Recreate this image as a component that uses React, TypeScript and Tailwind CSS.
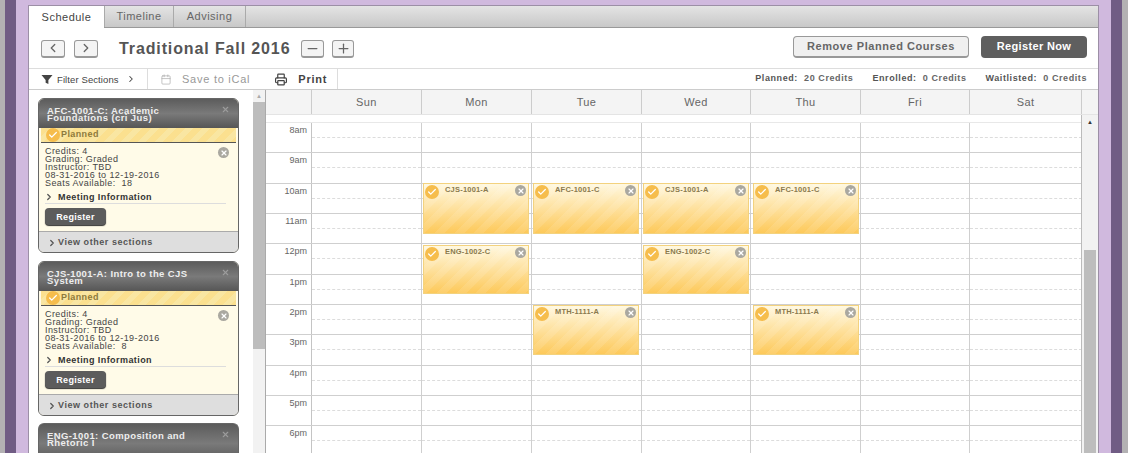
import React from 'react';
import { ChevronLeft, ChevronRight, Minus, Plus, Calendar, Printer, X, Check } from 'lucide-react';

const DAYS = ['Sun', 'Mon', 'Tue', 'Wed', 'Thu', 'Fri', 'Sat'];
const DAY_WIDTHS = ['w-[110px]', 'w-[110px]', 'w-[110px]', 'w-[109px]', 'w-[110px]', 'w-[109px]', 'w-[112px]'];
const HOURS = ['8am', '9am', '10am', '11am', '12pm', '1pm', '2pm', '3pm', '4pm', '5pm', '6pm'];

const COURSES = [
  { title: 'AFC-1001-C: Academic Foundations (cri Jus)', seats: '18' },
  { title: 'CJS-1001-A: Intro to the CJS System', seats: '8' },
];

// calendar blocks, positions are relative to the scrolling grid body
const EVENTS = [
  { name: 'CJS-1001-A', pos: 'left-[157px] top-[68px] h-[51px]' },
  { name: 'AFC-1001-C', pos: 'left-[267px] top-[68px] h-[51px]' },
  { name: 'CJS-1001-A', pos: 'left-[377px] top-[68px] h-[51px]' },
  { name: 'AFC-1001-C', pos: 'left-[487px] top-[68px] h-[51px]' },
  { name: 'ENG-1002-C', pos: 'left-[157px] top-[130px] h-[49px]' },
  { name: 'ENG-1002-C', pos: 'left-[377px] top-[130px] h-[49px]' },
  { name: 'MTH-1111-A', pos: 'left-[267px] top-[190px] h-[50px]' },
  { name: 'MTH-1111-A', pos: 'left-[487px] top-[190px] h-[50px]' },
];

const stripes =
  'bg-[repeating-linear-gradient(135deg,rgba(255,255,255,0.1)_0px,rgba(255,255,255,0.1)_7px,transparent_7px,transparent_14px),linear-gradient(to_bottom,#fff8e0,#fdc95a)]';

const cardHead =
  'bg-gradient-to-b from-[#5c5c5c] via-[#7a7a7a] to-[#565656] pl-2 pr-2 pt-[8px] text-[9.5px] leading-[7px] font-bold tracking-[0.4px] text-[#eee]';

function CheckBadge({ className }: { className: string }) {
  return (
    <span className={`flex items-center justify-center rounded-full bg-[#f6bd4c] ${className}`}>
      <Check className="h-[10px] w-[10px] text-white" strokeWidth={3} />
    </span>
  );
}

function CloseDot({ className }: { className: string }) {
  return (
    <span className={`flex h-[11px] w-[11px] items-center justify-center rounded-full bg-[#aaa8a0] ${className}`}>
      <X className="h-[8px] w-[8px] text-white" strokeWidth={3.5} />
    </span>
  );
}

function IconButton({ children, className }: { children: React.ReactNode; className: string }) {
  return (
    <button className={`mt-[3px] flex h-[18px] items-center justify-center rounded-[3px] border border-[#999] border-b-2 bg-[#f4f4f4] text-[#666] ${className}`}>
      {children}
    </button>
  );
}

function CourseCard({ title, seats }: { title: string; seats: string }) {
  return (
    <div className="mb-[8px] h-[155px] w-[201px] overflow-hidden rounded-[6px] border border-[#666] bg-[#fffbe8]">
      <div className={`flex h-[29px] items-start justify-between ${cardHead}`}>
        <span className="w-[165px]">{title}</span>
        <X className="mt-[-2px] h-[9px] w-[9px] text-[#9c9c9c]" strokeWidth={3} />
      </div>
      <div className="mx-[2px] flex h-[15px] items-center border-b border-[#555] bg-[repeating-linear-gradient(135deg,#fbe08f_0px,#fbe08f_6px,#f9e6a2_6px,#f9e6a2_12px)] pl-[5px] text-[9px] font-bold tracking-[0.4px] text-[#8d7a3c]">
        <CheckBadge className="mr-[1px] h-[14px] w-[14px]" />
        Planned
      </div>
      <div className="relative h-[88px] px-[6px] pt-[4px] text-[9px] leading-[8px] tracking-[0.42px] text-[#444]">
        <CloseDot className="absolute right-[9px] top-[4px]" />
        <div>Credits: 4</div>
        <div>Grading: Graded</div>
        <div>Instructor: TBD</div>
        <div>08-31-2016 to 12-19-2016</div>
        <div>Seats Available:&nbsp; {seats}</div>
        <div className="mt-[4px] mr-[6px] flex h-[13px] items-center border-b border-[#ddd] pb-[1px] font-bold text-[#333]">
          <ChevronRight className="ml-[-1px] mr-[4px] h-[10px] w-[10px] text-[#555]" strokeWidth={3} />
          Meeting Information
        </div>
        <button className="mt-[4px] flex h-[17px] w-[61px] items-center justify-center rounded-[4px] bg-[#5c5c5c] text-[9px] font-bold tracking-[0.3px] text-white shadow-[0_1px_1px_#333]">
          Register
        </button>
      </div>
      <div className="flex h-[21px] items-center border-t border-[#aaa] bg-[#dedede] pl-[8px] pt-[1px] text-[9px] font-bold tracking-[0.55px] text-[#555]">
        <ChevronRight className="mr-[1px] h-[10px] w-[10px]" strokeWidth={3} />
        View other sections
      </div>
    </div>
  );
}

function HourRow({ hour }: { hour: string }) {
  return (
    <div className="flex h-[30.33px] border-b border-[#cfcfcf]">
      <div className="w-[46px] shrink-0 border-r border-[#c4c4c4] pr-[4px] pt-[1px] text-right text-[9px] leading-[12px] text-[#666]">{hour}</div>
      {DAY_WIDTHS.map((w, i) => (
        <div key={i} className={`${w} shrink-0 border-r border-[#cfcfcf] last:border-r-0`}>
          <div className="h-[15px] border-b border-dashed border-[#dcdcdc]" />
        </div>
      ))}
    </div>
  );
}

export default function App() {
  return (
    <div className="flex h-[453px] w-[1128px] overflow-hidden bg-[#d0b9de] font-['Liberation_Sans',Arial,sans-serif]">
      <div className="w-[5px] shrink-0 bg-[#b3b1b3]" />
      <div className="w-[11px] shrink-0 bg-[#705c84]" />
      <div className="flex-1 px-[12px] pt-[5px]">
        <div className="h-[448px] w-[1071px] overflow-hidden border border-b-0 border-[#9c8fa6] bg-white">
          {/* Tabs */}
          <div className="flex h-[22px] border-b border-[#999] bg-gradient-to-b from-[#e4e4e4] to-[#c8c8c8] text-[11px] tracking-[0.5px]">
            <div className="flex h-[22px] w-[75px] items-center justify-center bg-white text-[#444]">Schedule</div>
            <div className="flex w-[70px] items-center justify-center border-x border-[#aaa] text-[#666]">Timeline</div>
            <div className="flex w-[72px] items-center justify-center border-r border-[#aaa] text-[#666]">Advising</div>
          </div>

          {/* Term header */}
          <div className="flex h-[41px] items-center border-b border-[#ddd] pb-[2px] pl-[12px] pr-[11px]">
            <IconButton className="mr-[9px] w-[24px]"><ChevronLeft className="h-[14px] w-[14px]" strokeWidth={2.25} /></IconButton>
            <IconButton className="w-[24px]"><ChevronRight className="h-[14px] w-[14px]" strokeWidth={2.25} /></IconButton>
            <span className="ml-[21px] mt-[3px] text-[16px] font-bold tracking-[0.88px] text-[#555]">Traditional Fall 2016</span>
            <IconButton className="ml-[11px] mr-[8px] w-[23px]"><Minus className="h-[15px] w-[15px]" /></IconButton>
            <IconButton className="w-[22px]"><Plus className="h-[15px] w-[15px]" /></IconButton>
            <button className="ml-auto flex h-[22px] w-[176px] items-center justify-center rounded-[4px] border border-[#999] border-b-2 bg-[#f0f0f0] pb-[1px] text-[11px] font-bold tracking-[0.55px] text-[#666]">
              Remove Planned Courses
            </button>
            <button className="ml-[12px] flex h-[22px] w-[106px] items-center justify-center rounded-[4px] bg-[#5f5f5f] pb-[2px] text-[11px] font-bold tracking-[0.35px] text-white">
              Register Now
            </button>
          </div>

          {/* Section toolbar */}
          <div className="flex h-[21px] items-center border-b border-[#ccc] pr-[11px] text-[#555]">
            <div className="flex h-full w-[119px] items-center border-r border-[#ddd] pl-[12px] text-[9.5px] tracking-[0.1px] text-[#444]">
              <svg viewBox="0 0 12 12" className="mr-[4px] h-[11px] w-[12px] fill-[#444]"><path d="M0 1h12L7.5 6.5V11L4.5 9.5V6.5z" /></svg>
              <span className="mt-[2px]">Filter Sections</span>
              <ChevronRight className="ml-[7px] h-[10px] w-[10px]" strokeWidth={2.5} />
            </div>
            <div className="flex h-full w-[190px] items-center border-r border-[#ddd] pl-[12px] text-[11px] tracking-[0.75px]">
              <Calendar className="mr-[10px] h-[11px] w-[12px] text-[#aaa]" strokeWidth={1.5} />
              <span className="text-[#999]">Save to iCal</span>
              <Printer className="ml-[24px] mr-[10px] h-[13px] w-[14px] text-[#444]" strokeWidth={2.2} />
              <span className="font-bold text-[#444]">Print</span>
            </div>
            <div className="ml-auto flex gap-[19px] text-[9px] font-bold tracking-[0.58px] text-[#666]">
              <span><span className="text-[#555]">Planned:</span>&nbsp; 20 Credits</span>
              <span><span className="text-[#555]">Enrolled:</span>&nbsp; 0 Credits</span>
              <span><span className="text-[#555]">Waitlisted:</span>&nbsp; 0 Credits</span>
            </div>
          </div>

          <div className="flex h-[370px]">
            {/* Sidebar */}
            <div className="flex w-[237px] shrink-0 border-r border-[#aaa]">
              <div className="w-[224px] shrink-0 pl-[9px] pt-[8px]">
                {COURSES.map(c => (
                  <CourseCard key={c.title} title={c.title} seats={c.seats} />
                ))}
                <div className={`mt-[-1px] h-[40px] w-[201px] rounded-t-[6px] border border-b-0 border-[#666] ${cardHead}`}>
                  <div className="flex justify-between">
                    <span className="w-[165px]">ENG-1001: Composition and Rhetoric I</span>
                    <X className="mt-[-2px] h-[9px] w-[9px] text-[#9c9c9c]" strokeWidth={3} />
                  </div>
                </div>
              </div>
              <div className="w-[12px] shrink-0 bg-[#f2f2f2]">
                <div className="h-[12px] text-center text-[6px] leading-[12px] text-[#aaa]">▲</div>
                <div className="h-[247px] bg-[#bdbdbd]" />
              </div>
            </div>

            {/* Calendar */}
            <div className="relative flex-1 overflow-hidden">
              <div className="flex h-[25px] border-b border-[#e4e4e4] bg-[#f4f4f4] text-[11px] tracking-[0.4px] text-[#666]">
                <div className="w-[46px] shrink-0 border-r border-[#ccc]" />
                {DAYS.map((d, i) => (
                  <div key={d} className={`${DAY_WIDTHS[i]} flex shrink-0 items-center justify-center border-r border-[#ccc]`}>{d}</div>
                ))}
                <div className="flex-1" />
              </div>
              <div className="relative h-[345px]">
                <div className="h-[8px] w-[816px] border-b border-[#e8e8e8] bg-white" />
                <div className="w-[816px]">
                  {HOURS.map(h => (
                    <HourRow key={h} hour={h} />
                  ))}
                </div>
                {EVENTS.map((e, i) => (
                  <div key={i} className={`absolute w-[106px] border border-[#f3d27e] ${stripes} ${e.pos}`}>
                    <CheckBadge className="absolute left-[1px] top-[1px] h-[14px] w-[14px]" />
                    <span className="absolute left-[21px] top-[1px] text-[7.5px] leading-[10px] font-bold tracking-[0.2px] text-[#8a7a4e]">{e.name}</span>
                    <CloseDot className="absolute right-[2px] top-[1px]" />
                  </div>
                ))}
              </div>
              <div className="absolute right-0 top-[25px] h-[345px] w-[17px] border-l border-[#bbb] bg-[#f2f2f2]">
                <div className="h-[14px] text-center text-[6px] leading-[14px] text-[#333]">▲</div>
                <div className="mx-[2px] mt-[121px] h-[210px] bg-[#bdbdbd]" />
              </div>
            </div>
          </div>
        </div>
      </div>
      <div className="w-[11px] shrink-0 bg-[#705c84]" />
      <div className="w-[6px] shrink-0 bg-[#b3b1b3]" />
    </div>
  );
}
